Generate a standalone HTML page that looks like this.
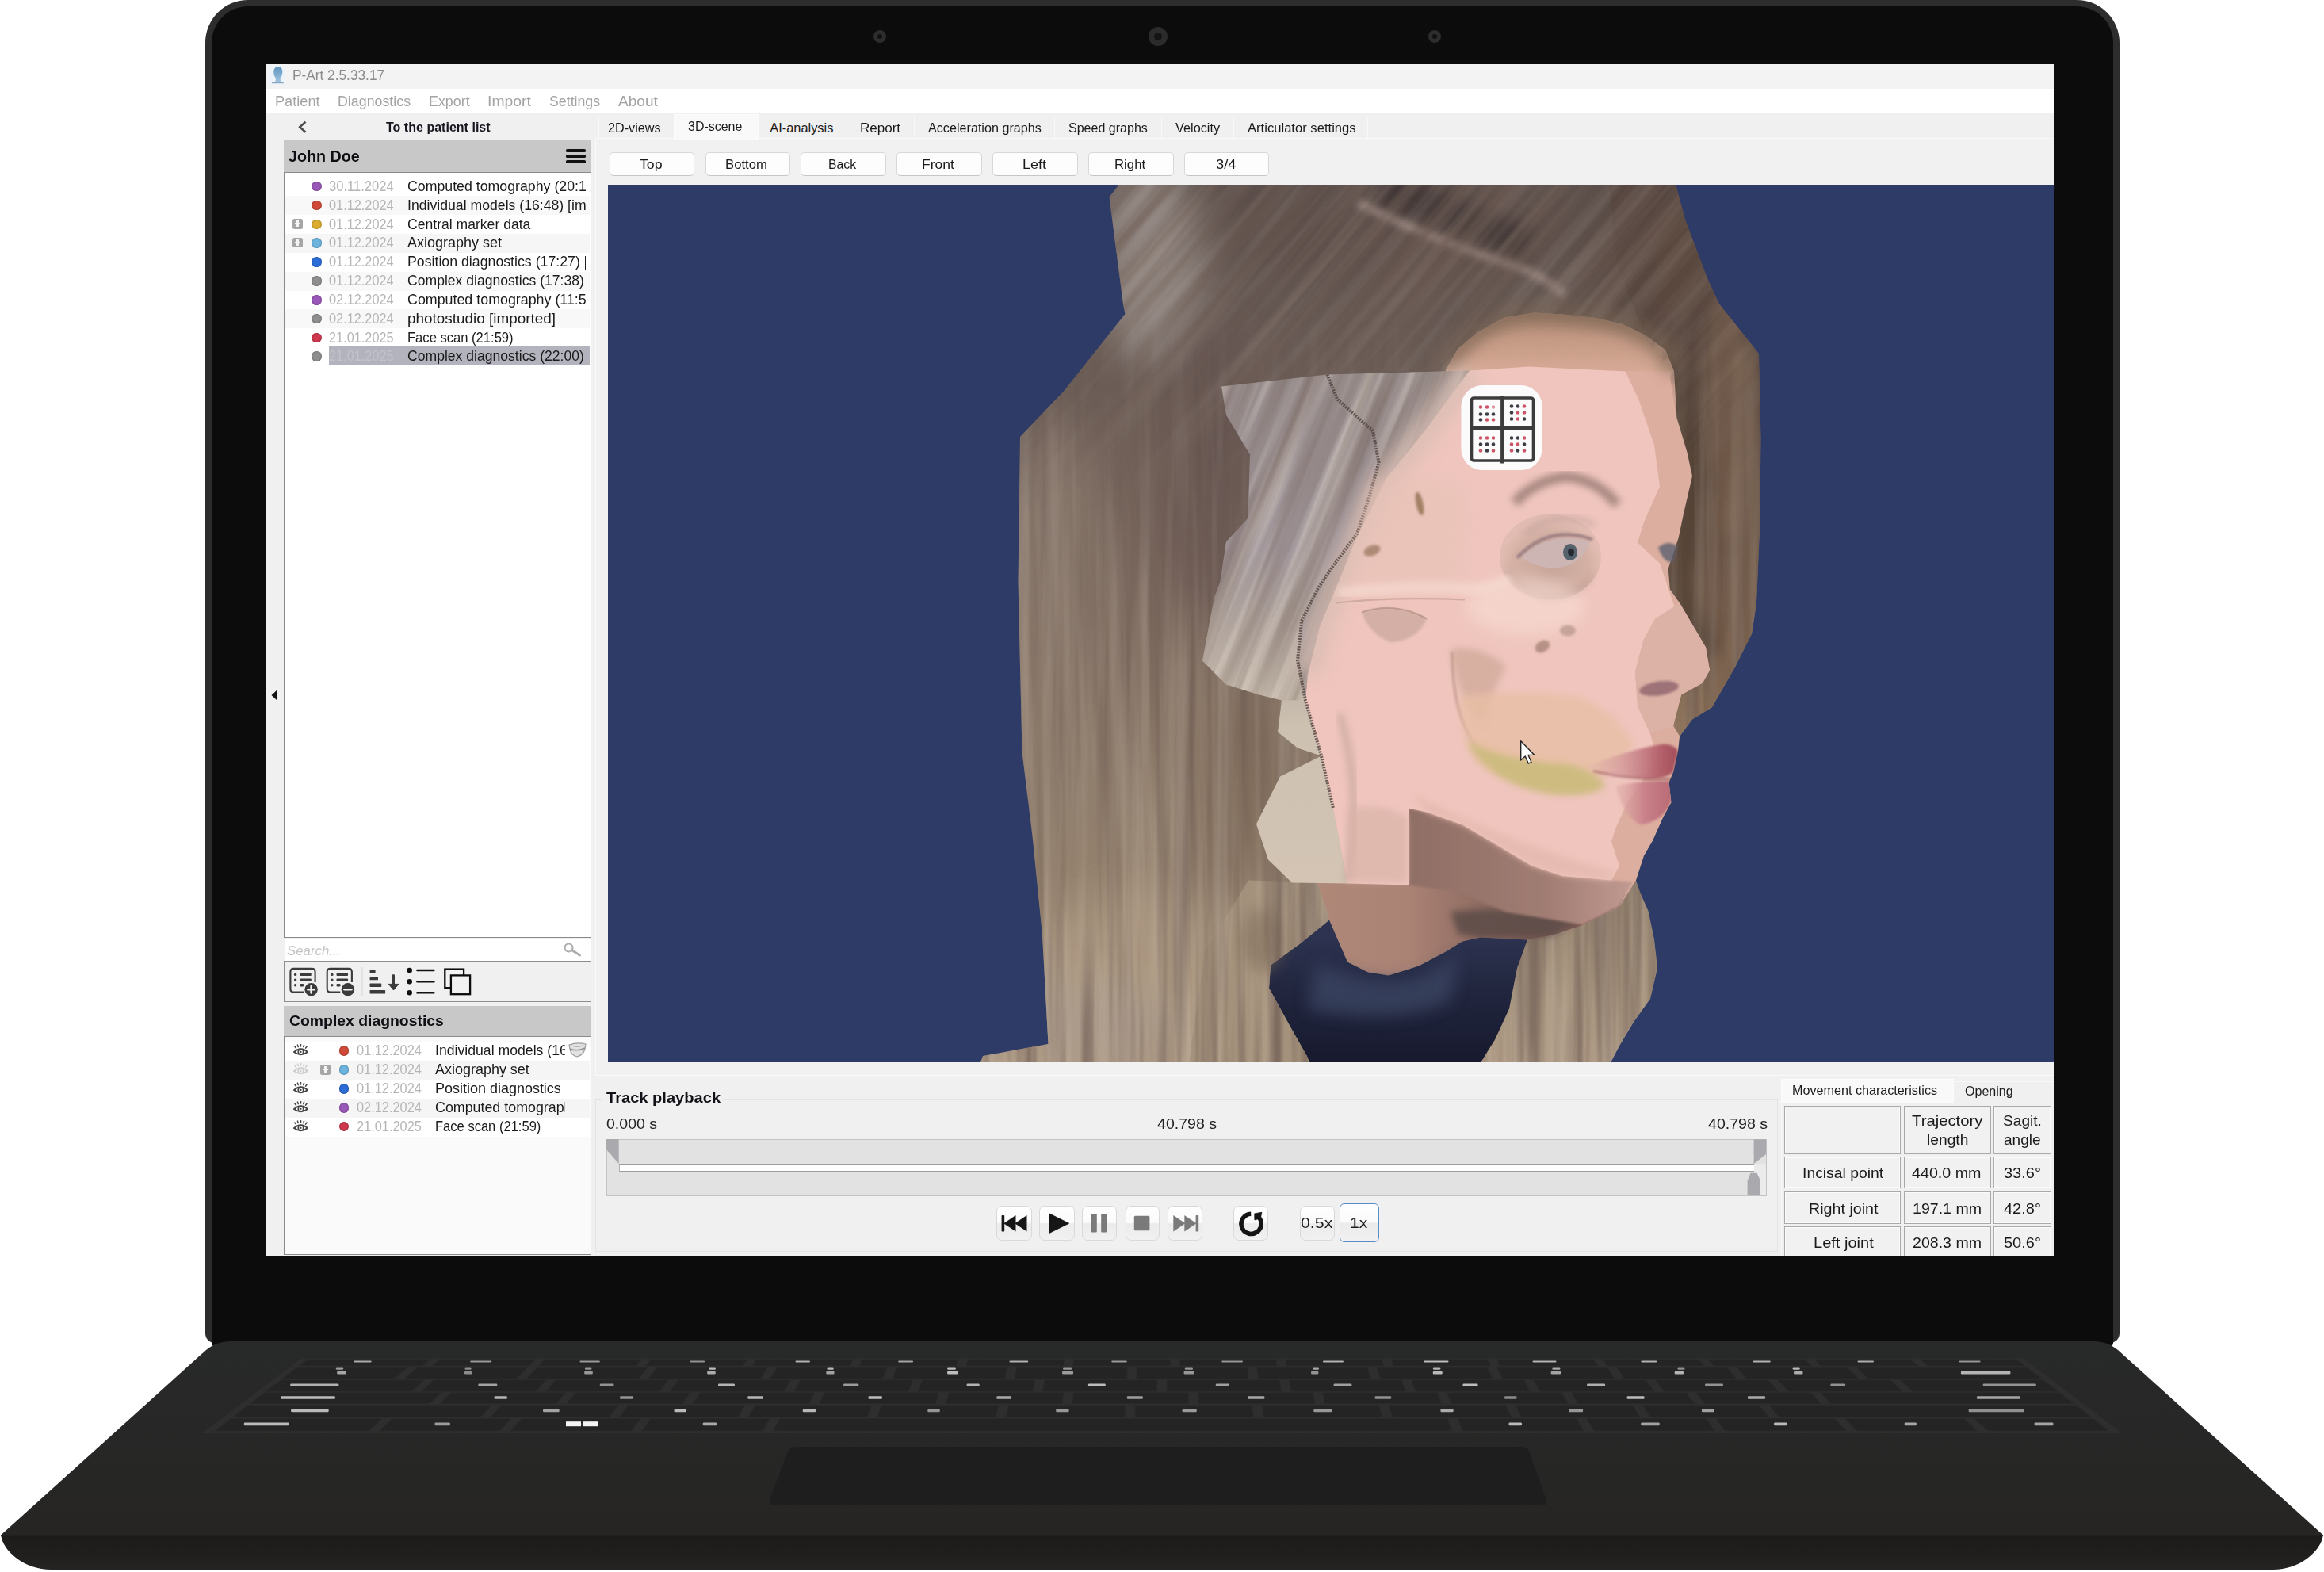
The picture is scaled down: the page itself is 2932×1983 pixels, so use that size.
<!DOCTYPE html>
<html><head><meta charset="utf-8"><title>P-Art</title>
<style>
html,body{margin:0;padding:0;background:#fff;}
body{width:2932px;height:1983px;position:relative;overflow:hidden;font-family:"Liberation Sans",sans-serif;}
.a{position:absolute;box-sizing:border-box;}
.t{position:absolute;white-space:nowrap;line-height:1;transform-origin:0 0;color:#1a1a1a;}
.b{font-weight:700;}
.i{font-style:italic;}
.g{color:#b5b5b5;}
#lid{left:259px;top:0px;width:2415px;height:1694px;background:#2d2d2d;border-radius:54px 54px 12px 12px;}
#lidin{left:267px;top:7.8px;width:2399px;height:1690px;background:#0c0c0c;border-radius:46px 46px 4px 4px;}
#screen{left:335px;top:81px;width:2256px;height:1504px;overflow:hidden;background:#f0f0f0;}
#scr{left:-335px;top:-81px;width:2932px;height:1983px;}
.dot{position:absolute;width:12.6px;height:12.6px;margin:.2px;border-radius:50%;box-shadow:inset 0 0 2.5px rgba(0,0,0,.4);}
.row{position:absolute;left:360px;width:384px;height:24px;}
.plus{position:absolute;width:13.5px;height:12.5px;border-radius:2.5px;background:#a6a6a6;}
.plus:before{content:"";position:absolute;left:3px;right:3px;top:5.2px;height:2.2px;background:#f4f4f4;}
.plus:after{content:"";position:absolute;top:2.4px;bottom:2.4px;left:5.6px;width:2.3px;background:#f4f4f4;}
.tab{position:absolute;box-sizing:border-box;top:147px;height:27px;background:#f0f0f0;border:1.5px solid #f9f9f9;border-bottom:none;}
.btn{position:absolute;box-sizing:border-box;top:192px;height:29.5px;width:107.5px;background:#fdfdfd;border:1.3px solid #d8d8d8;border-bottom-color:#c6c6c6;border-radius:5px;}
.pb{position:absolute;box-sizing:border-box;top:1521px;height:44px;width:44.5px;border:1.3px solid #d9d9d9;border-radius:7px;background:linear-gradient(#fefefe 0%,#fbfbfb 48%,#ebebeb 52%,#f1f1f1 100%);}
.cell{position:absolute;box-sizing:border-box;border:1.6px solid #a9a9a9;background:#f1f1f1;box-shadow:inset 1px 1px 0 #fbfbfb,inset -1px -1px 0 #fbfbfb;}
</style></head>
<body>
<!-- ===== laptop lid ===== -->
<div class="a" id="lid"></div>
<div class="a" id="lidin"></div>
<!-- cameras -->
<div class="a" style="left:1102px;top:38px;width:16px;height:16px;border-radius:50%;background:#2d2d2d;"></div>
<div class="a" style="left:1107px;top:43px;width:6px;height:6px;border-radius:50%;background:#111;"></div>
<div class="a" style="left:1449px;top:34px;width:24px;height:24px;border-radius:50%;background:#2b2b2b;"></div>
<div class="a" style="left:1456px;top:41px;width:10px;height:10px;border-radius:50%;background:#141414;"></div>
<div class="a" style="left:1802px;top:38px;width:16px;height:16px;border-radius:50%;background:#2d2d2d;"></div>
<div class="a" style="left:1807px;top:43px;width:6px;height:6px;border-radius:50%;background:#111;"></div>
<svg class="a" style="left:0;top:1680px" width="2932" height="303" viewBox="0 1680 2932 303">
<defs><linearGradient id="bt" x1="0" y1="0" x2="0" y2="1"><stop offset="0" stop-color="#282929"/><stop offset="1" stop-color="#262524"/></linearGradient><linearGradient id="lip" x1="0" y1="0" x2="0" y2="1"><stop offset="0" stop-color="#1c1b1a"/><stop offset="0.6" stop-color="#201f1d"/><stop offset="1" stop-color="#262422"/></linearGradient></defs>
<path d="M1 1936 L2931 1936 C2928 1958 2900 1980 2868 1980 L64 1980 C32 1980 4 1958 1 1936Z" fill="url(#lip)"/>
<path d="M300 1691.5 L2632 1691.5 C2652 1691.5 2662 1695 2672 1703 L2931 1936.5 L1 1936.5 L260 1703 C270 1695 280 1691.5 300 1691.5Z" fill="url(#bt)"/>
<path d="M379.7 1713.5 L2552.3 1713.5 L2677.3 1808 L254.7 1808Z" fill="#2e2e2e"/>
<path d="M387.3 1715.3 L541.4 1715.3 L533.1 1722.8 L377.6 1722.8Z M553.4 1715.3 L674.9 1715.3 L667.8 1722.8 L545.1 1722.8Z M686.9 1715.3 L808.5 1715.3 L802.6 1722.8 L679.9 1722.8Z M820.5 1715.3 L942.1 1715.3 L937.3 1722.8 L814.7 1722.8Z M954.0 1715.3 L1075.6 1715.3 L1072.1 1722.8 L949.4 1722.8Z M1087.6 1715.3 L1209.2 1715.3 L1206.9 1722.8 L1084.2 1722.8Z M1221.1 1715.3 L1342.7 1715.3 L1341.6 1722.8 L1218.9 1722.8Z M1354.7 1715.3 L1476.3 1715.3 L1476.4 1722.8 L1353.7 1722.8Z M1488.2 1715.3 L1609.8 1715.3 L1611.1 1722.8 L1488.4 1722.8Z M1621.8 1715.3 L1743.4 1715.3 L1745.9 1722.8 L1623.2 1722.8Z M1755.3 1715.3 L1876.9 1715.3 L1880.6 1722.8 L1758.0 1722.8Z M1888.9 1715.3 L2010.5 1715.3 L2015.4 1722.8 L1892.7 1722.8Z M2022.5 1715.3 L2144.0 1715.3 L2150.1 1722.8 L2027.5 1722.8Z M2156.0 1715.3 L2277.6 1715.3 L2284.9 1722.8 L2162.2 1722.8Z M2289.6 1715.3 L2411.2 1715.3 L2419.7 1722.8 L2297.0 1722.8Z M2423.1 1715.3 L2544.7 1715.3 L2554.4 1722.8 L2431.7 1722.8Z M374.0 1725.6 L513.3 1725.6 L498.2 1739.0 L356.6 1739.0Z M525.4 1725.6 L664.8 1725.6 L652.1 1739.0 L510.5 1739.0Z M676.9 1725.6 L816.2 1725.6 L805.9 1739.0 L664.4 1739.0Z M828.3 1725.6 L967.7 1725.6 L959.8 1739.0 L818.2 1739.0Z M979.8 1725.6 L1119.2 1725.6 L1113.6 1739.0 L972.1 1739.0Z M1131.3 1725.6 L1270.6 1725.6 L1267.5 1739.0 L1126.0 1739.0Z M1282.7 1725.6 L1422.1 1725.6 L1421.4 1739.0 L1279.8 1739.0Z M1434.2 1725.6 L1573.5 1725.6 L1575.2 1739.0 L1433.7 1739.0Z M1585.7 1725.6 L1725.0 1725.6 L1729.1 1739.0 L1587.6 1739.0Z M1737.1 1725.6 L1876.5 1725.6 L1883.0 1739.0 L1741.4 1739.0Z M1888.6 1725.6 L2027.9 1725.6 L2036.8 1739.0 L1895.3 1739.0Z M2040.0 1725.6 L2179.4 1725.6 L2190.7 1739.0 L2049.2 1739.0Z M2191.5 1725.6 L2330.8 1725.6 L2344.6 1739.0 L2203.0 1739.0Z M2343.0 1725.6 L2558.0 1725.6 L2575.4 1739.0 L2356.9 1739.0Z M354.0 1741.0 L534.5 1741.0 L519.3 1755.0 L335.9 1755.0Z M546.8 1741.0 L688.7 1741.0 L676.0 1755.0 L531.8 1755.0Z M701.0 1741.0 L842.9 1741.0 L832.8 1755.0 L688.6 1755.0Z M855.3 1741.0 L997.2 1741.0 L989.5 1755.0 L845.3 1755.0Z M1009.5 1741.0 L1151.4 1741.0 L1146.3 1755.0 L1002.1 1755.0Z M1163.7 1741.0 L1305.6 1741.0 L1303.0 1755.0 L1158.8 1755.0Z M1317.9 1741.0 L1459.8 1741.0 L1459.7 1755.0 L1315.5 1755.0Z M1472.2 1741.0 L1614.1 1741.0 L1616.5 1755.0 L1472.3 1755.0Z M1626.4 1741.0 L1768.3 1741.0 L1773.2 1755.0 L1629.0 1755.0Z M1780.6 1741.0 L1922.5 1741.0 L1929.9 1755.0 L1785.7 1755.0Z M1934.8 1741.0 L2076.7 1741.0 L2086.7 1755.0 L1942.5 1755.0Z M2089.1 1741.0 L2231.0 1741.0 L2243.4 1755.0 L2099.2 1755.0Z M2243.3 1741.0 L2385.2 1741.0 L2400.2 1755.0 L2256.0 1755.0Z M2397.5 1741.0 L2578.0 1741.0 L2596.1 1755.0 L2412.7 1755.0Z M333.3 1757.0 L556.4 1757.0 L542.6 1770.3 L316.1 1770.3Z M569.0 1757.0 L713.5 1757.0 L702.1 1770.3 L555.4 1770.3Z M726.1 1757.0 L870.6 1757.0 L861.6 1770.3 L714.8 1770.3Z M883.2 1757.0 L1027.7 1757.0 L1021.0 1770.3 L874.3 1770.3Z M1040.3 1757.0 L1184.8 1757.0 L1180.5 1770.3 L1033.8 1770.3Z M1197.4 1757.0 L1341.9 1757.0 L1340.0 1770.3 L1193.3 1770.3Z M1354.5 1757.0 L1499.0 1757.0 L1499.5 1770.3 L1352.8 1770.3Z M1511.6 1757.0 L1656.1 1757.0 L1659.0 1770.3 L1512.2 1770.3Z M1668.7 1757.0 L1813.2 1757.0 L1818.5 1770.3 L1671.7 1770.3Z M1825.7 1757.0 L1970.3 1757.0 L1977.9 1770.3 L1831.2 1770.3Z M1982.8 1757.0 L2127.4 1757.0 L2137.4 1770.3 L1990.7 1770.3Z M2139.9 1757.0 L2284.5 1757.0 L2296.9 1770.3 L2150.2 1770.3Z M2297.0 1757.0 L2598.7 1757.0 L2615.9 1770.3 L2309.7 1770.3Z M312.6 1773.0 L619.8 1773.0 L606.1 1787.4 L294.0 1787.4Z M632.6 1773.0 L779.7 1773.0 L768.7 1787.4 L619.1 1787.4Z M792.5 1773.0 L939.7 1773.0 L931.2 1787.4 L781.7 1787.4Z M952.5 1773.0 L1099.7 1773.0 L1093.8 1787.4 L944.2 1787.4Z M1112.5 1773.0 L1259.6 1773.0 L1256.3 1787.4 L1106.8 1787.4Z M1272.4 1773.0 L1419.6 1773.0 L1418.9 1787.4 L1269.3 1787.4Z M1432.4 1773.0 L1579.6 1773.0 L1581.4 1787.4 L1431.9 1787.4Z M1592.4 1773.0 L1739.5 1773.0 L1744.0 1787.4 L1594.4 1787.4Z M1752.3 1773.0 L1899.5 1773.0 L1906.5 1787.4 L1757.0 1787.4Z M1912.3 1773.0 L2059.5 1773.0 L2069.1 1787.4 L1919.5 1787.4Z M2072.3 1773.0 L2219.4 1773.0 L2231.6 1787.4 L2082.1 1787.4Z M2232.2 1773.0 L2619.4 1773.0 L2638.0 1787.4 L2244.6 1787.4Z M291.3 1789.5 L481.9 1789.5 L465.3 1804.8 L271.5 1804.8Z M495.0 1789.5 L644.8 1789.5 L631.0 1804.8 L478.6 1804.8Z M657.9 1789.5 L807.8 1789.5 L796.7 1804.8 L644.3 1804.8Z M820.8 1789.5 L970.7 1789.5 L962.4 1804.8 L809.9 1804.8Z M983.7 1789.5 L1826.1 1789.5 L1832.1 1804.8 L975.6 1804.8Z M1839.1 1789.5 L1989.0 1789.5 L1997.8 1804.8 L1845.4 1804.8Z M2002.0 1789.5 L2151.9 1789.5 L2163.5 1804.8 L2011.1 1804.8Z M2165.0 1789.5 L2314.9 1789.5 L2329.2 1804.8 L2176.7 1804.8Z M2327.9 1789.5 L2477.8 1789.5 L2494.8 1804.8 L2342.4 1804.8Z M2490.8 1789.5 L2640.7 1789.5 L2660.5 1804.8 L2508.1 1804.8Z" fill="#242424" stroke="#2a2a2a" stroke-width="0.8" stroke-linejoin="round"/>
<rect x="446.2" y="1716.5" width="22.5" height="2.0" rx="1.2" fill="#f2f2f2" opacity="0.67"/>
<rect x="593.2" y="1716.5" width="27.1" height="2.0" rx="1.2" fill="#f2f2f2" opacity="0.57"/>
<rect x="731.4" y="1716.5" width="25.5" height="2.0" rx="1.2" fill="#f2f2f2" opacity="0.59"/>
<rect x="870.4" y="1716.5" width="18.8" height="2.0" rx="1.2" fill="#f2f2f2" opacity="0.54"/>
<rect x="1003.5" y="1716.5" width="18.5" height="2.0" rx="1.2" fill="#f2f2f2" opacity="0.69"/>
<rect x="1133.1" y="1716.5" width="19.0" height="2.0" rx="1.2" fill="#f2f2f2" opacity="0.63"/>
<rect x="1273.4" y="1716.5" width="23.9" height="2.0" rx="1.2" fill="#f2f2f2" opacity="0.69"/>
<rect x="1402.2" y="1716.5" width="19.7" height="2.0" rx="1.2" fill="#f2f2f2" opacity="0.58"/>
<rect x="1541.2" y="1716.5" width="26.8" height="2.0" rx="1.2" fill="#f2f2f2" opacity="0.56"/>
<rect x="1668.9" y="1716.5" width="26.1" height="2.0" rx="1.2" fill="#f2f2f2" opacity="0.70"/>
<rect x="1795.8" y="1716.5" width="31.7" height="2.0" rx="1.2" fill="#f2f2f2" opacity="0.75"/>
<rect x="1933.5" y="1716.5" width="30.0" height="2.0" rx="1.2" fill="#f2f2f2" opacity="0.71"/>
<rect x="2070.3" y="1716.5" width="20.0" height="2.0" rx="1.2" fill="#f2f2f2" opacity="0.70"/>
<rect x="2211.5" y="1716.5" width="22.3" height="2.0" rx="1.2" fill="#f2f2f2" opacity="0.70"/>
<rect x="2343.5" y="1716.5" width="20.5" height="2.0" rx="1.2" fill="#f2f2f2" opacity="0.68"/>
<rect x="2471.7" y="1716.5" width="26.9" height="2.0" rx="1.2" fill="#f2f2f2" opacity="0.56"/>
<rect x="425.2" y="1729.8" width="11.7" height="3.6" rx="1.2" fill="#f2f2f2" opacity="0.63"/>
<rect x="423.8" y="1725.4" width="9.4" height="2.4" rx="1.2" fill="#f2f2f2" opacity="0.59"/>
<rect x="586.0" y="1729.8" width="10.0" height="3.6" rx="1.2" fill="#f2f2f2" opacity="0.51"/>
<rect x="586.6" y="1725.4" width="8.0" height="2.4" rx="1.2" fill="#f2f2f2" opacity="0.51"/>
<rect x="737.2" y="1729.8" width="10.6" height="3.6" rx="1.2" fill="#f2f2f2" opacity="0.57"/>
<rect x="737.9" y="1725.4" width="8.5" height="2.4" rx="1.2" fill="#f2f2f2" opacity="0.56"/>
<rect x="892.2" y="1729.8" width="10.5" height="3.6" rx="1.2" fill="#f2f2f2" opacity="0.67"/>
<rect x="894.5" y="1725.4" width="8.4" height="2.4" rx="1.2" fill="#f2f2f2" opacity="0.74"/>
<rect x="1042.3" y="1729.8" width="10.2" height="3.6" rx="1.2" fill="#f2f2f2" opacity="0.61"/>
<rect x="1043.5" y="1725.4" width="8.2" height="2.4" rx="1.2" fill="#f2f2f2" opacity="0.73"/>
<rect x="1195.1" y="1729.8" width="13.4" height="3.6" rx="1.2" fill="#f2f2f2" opacity="0.75"/>
<rect x="1195.2" y="1725.4" width="10.7" height="2.4" rx="1.2" fill="#f2f2f2" opacity="0.74"/>
<rect x="1340.1" y="1729.8" width="13.9" height="3.6" rx="1.2" fill="#f2f2f2" opacity="0.59"/>
<rect x="1341.0" y="1725.4" width="11.1" height="2.4" rx="1.2" fill="#f2f2f2" opacity="0.56"/>
<rect x="1493.6" y="1729.8" width="12.8" height="3.6" rx="1.2" fill="#f2f2f2" opacity="0.56"/>
<rect x="1494.8" y="1725.4" width="10.2" height="2.4" rx="1.2" fill="#f2f2f2" opacity="0.55"/>
<rect x="1654.1" y="1729.8" width="9.2" height="3.6" rx="1.2" fill="#f2f2f2" opacity="0.55"/>
<rect x="1656.6" y="1725.4" width="7.4" height="2.4" rx="1.2" fill="#f2f2f2" opacity="0.66"/>
<rect x="1807.8" y="1729.8" width="11.9" height="3.6" rx="1.2" fill="#f2f2f2" opacity="0.73"/>
<rect x="1807.9" y="1725.4" width="9.5" height="2.4" rx="1.2" fill="#f2f2f2" opacity="0.71"/>
<rect x="1956.7" y="1729.8" width="12.5" height="3.6" rx="1.2" fill="#f2f2f2" opacity="0.62"/>
<rect x="1958.4" y="1725.4" width="10.0" height="2.4" rx="1.2" fill="#f2f2f2" opacity="0.66"/>
<rect x="2112.7" y="1729.8" width="11.3" height="3.6" rx="1.2" fill="#f2f2f2" opacity="0.70"/>
<rect x="2116.5" y="1725.4" width="9.0" height="2.4" rx="1.2" fill="#f2f2f2" opacity="0.52"/>
<rect x="2263.1" y="1729.8" width="11.4" height="3.6" rx="1.2" fill="#f2f2f2" opacity="0.67"/>
<rect x="2261.6" y="1725.4" width="9.1" height="2.4" rx="1.2" fill="#f2f2f2" opacity="0.73"/>
<rect x="2473.9" y="1729.8" width="62.5" height="3.6" rx="1.2" fill="#f2f2f2" opacity="0.70"/>
<rect x="366.2" y="1745.5" width="61.2" height="3.6" rx="1.2" fill="#f2f2f2" opacity="0.69"/>
<rect x="603.4" y="1745.5" width="23.9" height="3.6" rx="1.2" fill="#f2f2f2" opacity="0.62"/>
<rect x="756.8" y="1745.5" width="17.6" height="3.6" rx="1.2" fill="#f2f2f2" opacity="0.54"/>
<rect x="906.0" y="1745.5" width="21.0" height="3.6" rx="1.2" fill="#f2f2f2" opacity="0.70"/>
<rect x="1064.1" y="1745.5" width="19.2" height="3.6" rx="1.2" fill="#f2f2f2" opacity="0.58"/>
<rect x="1219.6" y="1745.5" width="16.1" height="3.6" rx="1.2" fill="#f2f2f2" opacity="0.70"/>
<rect x="1372.9" y="1745.5" width="21.9" height="3.6" rx="1.2" fill="#f2f2f2" opacity="0.74"/>
<rect x="1533.8" y="1745.5" width="17.2" height="3.6" rx="1.2" fill="#f2f2f2" opacity="0.60"/>
<rect x="1682.6" y="1745.5" width="22.8" height="3.6" rx="1.2" fill="#f2f2f2" opacity="0.60"/>
<rect x="1845.5" y="1745.5" width="19.0" height="3.6" rx="1.2" fill="#f2f2f2" opacity="0.74"/>
<rect x="2002.1" y="1745.5" width="23.0" height="3.6" rx="1.2" fill="#f2f2f2" opacity="0.68"/>
<rect x="2151.1" y="1745.5" width="22.8" height="3.6" rx="1.2" fill="#f2f2f2" opacity="0.54"/>
<rect x="2309.4" y="1745.5" width="18.7" height="3.6" rx="1.2" fill="#f2f2f2" opacity="0.53"/>
<rect x="2501.7" y="1745.5" width="67.1" height="3.6" rx="1.2" fill="#f2f2f2" opacity="0.54"/>
<rect x="354.0" y="1761.2" width="68.9" height="3.6" rx="1.2" fill="#f2f2f2" opacity="0.73"/>
<rect x="623.5" y="1761.2" width="16.4" height="3.6" rx="1.2" fill="#f2f2f2" opacity="0.70"/>
<rect x="782.0" y="1761.2" width="17.1" height="3.6" rx="1.2" fill="#f2f2f2" opacity="0.54"/>
<rect x="943.3" y="1761.2" width="19.4" height="3.6" rx="1.2" fill="#f2f2f2" opacity="0.71"/>
<rect x="1095.5" y="1761.2" width="17.4" height="3.6" rx="1.2" fill="#f2f2f2" opacity="0.75"/>
<rect x="1257.3" y="1761.2" width="18.8" height="3.6" rx="1.2" fill="#f2f2f2" opacity="0.66"/>
<rect x="1421.8" y="1761.2" width="20.1" height="3.6" rx="1.2" fill="#f2f2f2" opacity="0.59"/>
<rect x="1574.2" y="1761.2" width="21.2" height="3.6" rx="1.2" fill="#f2f2f2" opacity="0.64"/>
<rect x="1734.6" y="1761.2" width="20.6" height="3.6" rx="1.2" fill="#f2f2f2" opacity="0.53"/>
<rect x="1898.0" y="1761.2" width="15.5" height="3.6" rx="1.2" fill="#f2f2f2" opacity="0.50"/>
<rect x="2052.6" y="1761.2" width="22.0" height="3.6" rx="1.2" fill="#f2f2f2" opacity="0.74"/>
<rect x="2204.9" y="1761.2" width="22.2" height="3.6" rx="1.2" fill="#f2f2f2" opacity="0.66"/>
<rect x="2493.9" y="1761.2" width="55.0" height="3.6" rx="1.2" fill="#f2f2f2" opacity="0.63"/>
<rect x="367.1" y="1777.7" width="47.6" height="3.6" rx="1.2" fill="#f2f2f2" opacity="0.73"/>
<rect x="685.0" y="1777.7" width="20.7" height="3.6" rx="1.2" fill="#f2f2f2" opacity="0.61"/>
<rect x="850.5" y="1777.7" width="15.6" height="3.6" rx="1.2" fill="#f2f2f2" opacity="0.72"/>
<rect x="1012.7" y="1777.7" width="16.5" height="3.6" rx="1.2" fill="#f2f2f2" opacity="0.71"/>
<rect x="1170.3" y="1777.7" width="15.5" height="3.6" rx="1.2" fill="#f2f2f2" opacity="0.55"/>
<rect x="1332.2" y="1777.7" width="16.4" height="3.6" rx="1.2" fill="#f2f2f2" opacity="0.56"/>
<rect x="1491.5" y="1777.7" width="18.3" height="3.6" rx="1.2" fill="#f2f2f2" opacity="0.57"/>
<rect x="1657.3" y="1777.7" width="22.9" height="3.6" rx="1.2" fill="#f2f2f2" opacity="0.56"/>
<rect x="1817.4" y="1777.7" width="16.3" height="3.6" rx="1.2" fill="#f2f2f2" opacity="0.65"/>
<rect x="1979.0" y="1777.7" width="18.1" height="3.6" rx="1.2" fill="#f2f2f2" opacity="0.56"/>
<rect x="2146.9" y="1777.7" width="16.1" height="3.6" rx="1.2" fill="#f2f2f2" opacity="0.60"/>
<rect x="2483.6" y="1777.7" width="69.8" height="3.6" rx="1.2" fill="#f2f2f2" opacity="0.53"/>
<rect x="307.8" y="1794.6" width="56.6" height="3.6" rx="1.2" fill="#f2f2f2" opacity="0.73"/>
<rect x="548.5" y="1794.6" width="19.4" height="3.6" rx="1.2" fill="#f2f2f2" opacity="0.59"/>
<rect x="717.4" y="1794.6" width="15.9" height="3.6" rx="1.2" fill="#f2f2f2" opacity="0.61"/>
<rect x="886.7" y="1794.6" width="17.4" height="3.6" rx="1.2" fill="#f2f2f2" opacity="0.65"/>
<rect x="1903.5" y="1794.6" width="16.5" height="3.6" rx="1.2" fill="#f2f2f2" opacity="0.73"/>
<rect x="2070.2" y="1794.6" width="23.6" height="3.6" rx="1.2" fill="#f2f2f2" opacity="0.61"/>
<rect x="2238.1" y="1794.6" width="16.3" height="3.6" rx="1.2" fill="#f2f2f2" opacity="0.73"/>
<rect x="2402.7" y="1794.6" width="15.2" height="3.6" rx="1.2" fill="#f2f2f2" opacity="0.63"/>
<rect x="2566.6" y="1794.6" width="23.8" height="3.6" rx="1.2" fill="#f2f2f2" opacity="0.63"/>
<rect x="714" y="1793.2" width="19" height="6" fill="#f4f4f4"/><rect x="735" y="1793.2" width="20" height="6" fill="#f4f4f4"/>
<path d="M1004 1825 L1920 1825 Q1927 1825 1929 1831 L1951 1892 Q1953 1899 1945 1899 L977 1899 Q969 1899 971 1892 L994 1831 Q996 1825 1004 1825Z" fill="#1e1e1e"/>
</svg>

<!-- ===== screen ===== -->
<div class="a" id="screen"><div class="a" id="scr">
<!-- title bar -->
<div class="a" style="left:335px;top:81px;width:2256px;height:31px;background:#f3f3f3;"></div>
<div class="a" style="left:335px;top:111.5px;width:2256px;height:30px;background:#fff;"></div>
<div class="a" style="left:339px;top:82.5px;width:21px;height:24px;background:#edf3f9;border-radius:3px;filter:blur(.6px)"></div>
<svg class="a" style="left:339px;top:82px" width="22" height="26" viewBox="339 82 22 26"><defs><linearGradient id="ag" x1="0" y1="0" x2="0" y2="1"><stop offset="0" stop-color="#5f96c2"/><stop offset="1" stop-color="#a6c7e0"/></linearGradient><filter id="ab"><feGaussianBlur stdDeviation=".7"/></filter></defs><g filter="url(#ab)"><path d="M350.9 84.2 C355.8 84.2 356.8 88.6 356.2 92.4 C355.8 95.5 354.6 97.5 353.6 98.6 L354 102.6 L357.4 104 L357.4 105 L343.4 105 L343.4 104 L347.6 102.6 L348 98.6 C346.8 97.4 345.8 95.3 345.4 92.4 C344.9 88.6 346 84.2 350.9 84.2Z" fill="url(#ag)"/><rect x="343" y="103.6" width="14.6" height="1.6" fill="#8aa6c0"/></g></svg>

<span class="t" style="left:369.20px;top:84.70px;font-size:19.26px;transform:scaleX(0.8966);color:#8b8b8b;">P-Art 2.5.33.17</span>
<span class="t" style="left:346.70px;top:117.95px;font-size:19.26px;transform:scaleX(0.9443);color:#a3a3a3;">Patient</span>
<span class="t" style="left:426.20px;top:117.95px;font-size:19.26px;transform:scaleX(0.9255);color:#a3a3a3;">Diagnostics</span>
<span class="t" style="left:541.20px;top:117.95px;font-size:19.26px;transform:scaleX(0.9274);color:#a3a3a3;">Export</span>
<span class="t" style="left:615.45px;top:117.95px;font-size:19.26px;transform:scaleX(1.0053);color:#a3a3a3;">Import</span>
<span class="t" style="left:692.95px;top:117.95px;font-size:19.26px;transform:scaleX(0.9215);color:#a3a3a3;">Settings</span>
<span class="t" style="left:779.70px;top:117.95px;font-size:19.26px;transform:scaleX(0.9908);color:#a3a3a3;">About</span>
<!-- splitter arrow -->
<svg class="a" style="left:341px;top:869px" width="10" height="16" viewBox="0 0 10 16"><path d="M8.5 1.5 L1.5 8 L8.5 14.5Z" fill="#111"/></svg>
<!-- back chevron -->
<svg class="a" style="left:375px;top:152px" width="14" height="17" viewBox="0 0 14 17"><path d="M10.5 1.8 L3.2 8.3 L10.5 14.8" fill="none" stroke="#4d4d4d" stroke-width="2.6" stroke-linejoin="miter"/></svg>
<span class="t b" style="left:486.70px;top:152.16px;font-size:16.35px;transform:scaleX(0.9815);color:#16161f;">To the patient list</span>
<!-- John Doe header -->
<div class="a" style="left:358px;top:177px;width:387.5px;height:40.5px;background:#c8c8c8;"></div>
<span class="t b" style="left:364.20px;top:187.08px;font-size:19.99px;transform:scaleX(0.9841);color:#0e0e12;">John Doe</span>
<div class="a" style="left:714px;top:188px;width:24.5px;height:3.6px;background:#111;border-radius:1.5px;box-shadow:0 7px 0 #111,0 14px 0 #111;"></div>
<!-- upper list -->
<div class="a" style="left:358px;top:216.5px;width:387.5px;height:966px;background:#fff;border:1.6px solid #8a8a8a;"></div>
<div class="row" style="top:247px;background:#f8f8f8"></div>
<div class="row" style="top:295px;background:#f6f6f6"></div>
<div class="row" style="top:343px;background:#f8f8f8"></div>
<div class="row" style="top:390px;background:#f8f8f8"></div>
<div class="a" style="left:414.5px;top:437px;width:329.5px;height:23.2px;background:#b3b3be;"></div>
<div class="dot" style="left:393px;top:228.5px;background:#9a58b8"></div>
<div class="dot" style="left:393px;top:252.5px;background:#d24a39"></div>
<div class="dot" style="left:393px;top:276.5px;background:#dbae2f"></div>
<div class="dot" style="left:393px;top:300px;background:#6db4de"></div>
<div class="dot" style="left:393px;top:324px;background:#2c6dd8"></div>
<div class="dot" style="left:393px;top:348px;background:#8f8f8f"></div>
<div class="dot" style="left:393px;top:372px;background:#9a58b8"></div>
<div class="dot" style="left:393px;top:395.5px;background:#8f8f8f"></div>
<div class="dot" style="left:393px;top:419.5px;background:#cf3950"></div>
<div class="dot" style="left:393px;top:443px;background:#8f8f8f"></div>
<div class="plus" style="left:368.8px;top:276px"></div>
<div class="plus" style="left:368.8px;top:299.8px"></div>
<div class="a" style="left:360px;top:218px;width:379px;height:250px;overflow:hidden"><div class="a" style="left:-360px;top:-218px;width:900px;height:600px">
<span class="t g" style="left:415.45px;top:225.92px;font-size:18.17px;transform:scaleX(0.9114);">30.11.2024</span>
<span class="t g" style="left:415.45px;top:249.72px;font-size:18.17px;transform:scaleX(0.8979);">01.12.2024</span>
<span class="t g" style="left:415.45px;top:273.62px;font-size:18.17px;transform:scaleX(0.8979);">01.12.2024</span>
<span class="t g" style="left:415.45px;top:297.42px;font-size:18.17px;transform:scaleX(0.8979);">01.12.2024</span>
<span class="t g" style="left:415.45px;top:321.22px;font-size:18.17px;transform:scaleX(0.8979);">01.12.2024</span>
<span class="t g" style="left:415.45px;top:345.12px;font-size:18.17px;transform:scaleX(0.8979);">01.12.2024</span>
<span class="t g" style="left:415.45px;top:368.92px;font-size:18.17px;transform:scaleX(0.8979);">02.12.2024</span>
<span class="t g" style="left:415.45px;top:392.72px;font-size:18.17px;transform:scaleX(0.8979);">02.12.2024</span>
<span class="t g" style="left:415.45px;top:416.62px;font-size:18.17px;transform:scaleX(0.8979);">21.01.2025</span>
<span class="t" style="left:415.45px;top:440.42px;font-size:18.17px;transform:scaleX(0.8979);color:#c2c2cb;">21.01.2025</span>
<span class="t" style="left:514.20px;top:225.92px;font-size:18.17px;transform:scaleX(0.9771);">Computed tomography (20:17)</span>
<span class="t" style="left:514.20px;top:249.72px;font-size:18.17px;transform:scaleX(0.9721);">Individual models (16:48) [imported]</span>
<span class="t" style="left:514.20px;top:273.62px;font-size:18.17px;transform:scaleX(0.9682);">Central marker data</span>
<span class="t" style="left:514.20px;top:297.42px;font-size:18.17px;transform:scaleX(0.9916);">Axiography set</span>
<span class="t" style="left:514.20px;top:321.22px;font-size:18.17px;transform:scaleX(0.9766);">Position diagnostics (17:27) [imported]</span>
<span class="t" style="left:514.20px;top:345.12px;font-size:18.17px;transform:scaleX(0.9685);">Complex diagnostics (17:38)</span>
<span class="t" style="left:514.20px;top:368.92px;font-size:18.17px;transform:scaleX(0.9824);">Computed tomography (11:55)</span>
<span class="t" style="left:514.20px;top:392.72px;font-size:18.17px;transform:scaleX(1.0413);">photostudio [imported]</span>
<span class="t" style="left:514.20px;top:416.62px;font-size:18.17px;transform:scaleX(0.9129);">Face scan (21:59)</span>
<span class="t" style="left:514.20px;top:440.42px;font-size:18.17px;transform:scaleX(0.9685);">Complex diagnostics (22:00)</span>
</div></div>
<!-- search -->
<div class="a" style="left:359px;top:1184px;width:385.5px;height:28px;background:#fff;"></div>
<span class="t i" style="left:362.20px;top:1190.98px;font-size:17.15px;transform:scaleX(0.9816);color:#c4c4c4;">Search...</span>
<svg class="a" style="left:709px;top:1188px" width="26" height="20" viewBox="0 0 26 20"><circle cx="8.5" cy="7.5" r="5" fill="none" stroke="#adadad" stroke-width="2.2"/><path d="M12.3 10.6 L22.5 17" stroke="#adadad" stroke-width="3" stroke-linecap="round"/></svg>
<!-- toolbar -->
<div class="a" style="left:358px;top:1212px;width:387.5px;height:51.5px;background:#f0f0f0;border:1.6px solid #8e8e8e;"></div>
<svg class="a" style="left:360px;top:1215px" width="245" height="46" viewBox="360 1215 245 46">
<g fill="none" stroke="#3b3b3b" stroke-width="2.1">
<path d="M383 1251.6 H370.5 Q366.4 1251.6 366.4 1247.5 V1226 Q366.4 1221.9 370.5 1221.9 H393.5 Q397.6 1221.9 397.6 1226 V1239"/>
<path d="M429.3 1251.6 H416.8 Q412.7 1251.6 412.7 1247.5 V1226 Q412.7 1221.9 416.8 1221.9 H439.8 Q443.9 1221.9 443.9 1226 V1239"/>
</g>
<g fill="#3b3b3b">
<circle cx="372.6" cy="1229.4" r="1.7"/><circle cx="372.6" cy="1236.1" r="1.7"/><circle cx="372.6" cy="1242.8" r="1.7"/>
<rect x="378.2" y="1227.7" width="14.6" height="3.3" rx="1.2"/><rect x="378.2" y="1234.4" width="14.6" height="3.3" rx="1.2"/><rect x="378.2" y="1241.1" width="5" height="3.3" rx="1.2"/>
<circle cx="392.6" cy="1248.2" r="8.2"/>
<circle cx="418.9" cy="1229.4" r="1.7"/><circle cx="418.9" cy="1236.1" r="1.7"/><circle cx="418.9" cy="1242.8" r="1.7"/>
<rect x="424.5" y="1227.7" width="14.6" height="3.3" rx="1.2"/><rect x="424.5" y="1234.4" width="14.6" height="3.3" rx="1.2"/><rect x="424.5" y="1241.1" width="5" height="3.3" rx="1.2"/>
<circle cx="438.9" cy="1248.2" r="8.2"/>
<!-- sort -->
<rect x="466.6" y="1224" width="7" height="3.9" rx=".6"/><rect x="466.6" y="1232" width="10.4" height="4.3" rx=".6"/><rect x="466.6" y="1240.6" width="14.6" height="4.4" rx=".6"/><rect x="466.6" y="1248.9" width="19.5" height="4.7" rx=".6"/>
<rect x="494.7" y="1229.2" width="3.3" height="13.5" rx="1"/><path d="M490.3 1241.4 H502.9 L496.5 1249Z" stroke="#3b3b3b" stroke-width="1" stroke-linejoin="round"/>
</g>
<g stroke="#f4f4f4" stroke-width="2.5" stroke-linecap="round"><path d="M388.3 1248.2 H396.9 M392.6 1243.9 V1252.5"/><path d="M434.4 1248.2 H443.4"/></g>
<rect x="456.4" y="1220" width="1.2" height="36.5" fill="#dadada"/>
<g fill="#111"><circle cx="516.7" cy="1224" r="3.3"/><circle cx="516.7" cy="1238.2" r="3.3"/><circle cx="516.7" cy="1252.3" r="3.3"/>
<rect x="525.2" y="1222.8" width="23.4" height="2.5" rx="1.2"/><rect x="525.2" y="1237" width="23.4" height="2.5" rx="1.2"/><rect x="525.2" y="1251.1" width="23.4" height="2.5" rx="1.2"/></g>
<rect x="561.3" y="1222.6" width="23.8" height="23.6" fill="#f3f3f3" stroke="#0c0c0c" stroke-width="2.3"/>
<rect x="568.9" y="1230.4" width="24.2" height="23.8" fill="#f1f1f1" stroke="#0c0c0c" stroke-width="2.3"/>
</svg>

<!-- lower header -->
<div class="a" style="left:358px;top:1268.5px;width:387.5px;height:39px;background:#c8c8c8;"></div>
<span class="t b" style="left:364.70px;top:1279.74px;font-size:17.44px;transform:scaleX(1.1109);color:#0e0e14;">Complex diagnostics</span>
<!-- lower list -->
<div class="a" style="left:358px;top:1306.5px;width:387.5px;height:276.5px;background:#fafafa;border:1.6px solid #8a8a8a;"></div>
<div class="row" style="top:1314px;background:#fff"></div>
<div class="row" style="top:1338px;background:#f5f5f5"></div>
<div class="row" style="top:1362px;background:#fff"></div>
<div class="row" style="top:1386px;background:#f5f5f5"></div>
<div class="row" style="top:1410px;background:#fff"></div>
<div class="dot" style="left:427.5px;top:1319px;background:#d24a39"></div>
<div class="dot" style="left:427.5px;top:1343px;background:#6db4de"></div>
<div class="dot" style="left:427.5px;top:1367px;background:#2c6dd8"></div>
<div class="dot" style="left:427.5px;top:1391px;background:#9a58b8"></div>
<div class="dot" style="left:427.5px;top:1414.5px;background:#cf3950"></div>
<div class="plus" style="left:403.8px;top:1343px"></div>
<svg class="a" style="left:369.7px;top:1317.2px;opacity:1" width="19" height="16" viewBox="0 0 19 16"><path d="M0.9 10.1 Q9.5 2.6 18.1 10.1 Q9.5 16.6 0.9 10.1Z" fill="#fff" stroke="#444" stroke-width="1.9" stroke-linejoin="round"/><circle cx="9.5" cy="9.9" r="3.3" fill="#fff" stroke="#444" stroke-width="1.7"/><circle cx="9.5" cy="9.9" r="1.15" fill="#444"/><path d="M3.4 5.2 L1.9 3 M6.2 3.6 L5.4 1.1 M9.5 3 V0.4 M12.8 3.6 L13.6 1.1 M15.6 5.2 L17.1 3" stroke="#444" stroke-width="1.5" stroke-linecap="round"/></svg>
<svg class="a" style="left:369.7px;top:1340.8px;opacity:0.22" width="19" height="16" viewBox="0 0 19 16"><path d="M0.9 10.1 Q9.5 2.6 18.1 10.1 Q9.5 16.6 0.9 10.1Z" fill="#fff" stroke="#444" stroke-width="1.9" stroke-linejoin="round"/><circle cx="9.5" cy="9.9" r="3.3" fill="#fff" stroke="#444" stroke-width="1.7"/><circle cx="9.5" cy="9.9" r="1.15" fill="#444"/><path d="M3.4 5.2 L1.9 3 M6.2 3.6 L5.4 1.1 M9.5 3 V0.4 M12.8 3.6 L13.6 1.1 M15.6 5.2 L17.1 3" stroke="#444" stroke-width="1.5" stroke-linecap="round"/></svg>
<svg class="a" style="left:369.7px;top:1364.9px;opacity:1" width="19" height="16" viewBox="0 0 19 16"><path d="M0.9 10.1 Q9.5 2.6 18.1 10.1 Q9.5 16.6 0.9 10.1Z" fill="#fff" stroke="#444" stroke-width="1.9" stroke-linejoin="round"/><circle cx="9.5" cy="9.9" r="3.3" fill="#fff" stroke="#444" stroke-width="1.7"/><circle cx="9.5" cy="9.9" r="1.15" fill="#444"/><path d="M3.4 5.2 L1.9 3 M6.2 3.6 L5.4 1.1 M9.5 3 V0.4 M12.8 3.6 L13.6 1.1 M15.6 5.2 L17.1 3" stroke="#444" stroke-width="1.5" stroke-linecap="round"/></svg>
<svg class="a" style="left:369.7px;top:1388.5px;opacity:1" width="19" height="16" viewBox="0 0 19 16"><path d="M0.9 10.1 Q9.5 2.6 18.1 10.1 Q9.5 16.6 0.9 10.1Z" fill="#fff" stroke="#444" stroke-width="1.9" stroke-linejoin="round"/><circle cx="9.5" cy="9.9" r="3.3" fill="#fff" stroke="#444" stroke-width="1.7"/><circle cx="9.5" cy="9.9" r="1.15" fill="#444"/><path d="M3.4 5.2 L1.9 3 M6.2 3.6 L5.4 1.1 M9.5 3 V0.4 M12.8 3.6 L13.6 1.1 M15.6 5.2 L17.1 3" stroke="#444" stroke-width="1.5" stroke-linecap="round"/></svg>
<svg class="a" style="left:369.7px;top:1412.5px;opacity:1" width="19" height="16" viewBox="0 0 19 16"><path d="M0.9 10.1 Q9.5 2.6 18.1 10.1 Q9.5 16.6 0.9 10.1Z" fill="#fff" stroke="#444" stroke-width="1.9" stroke-linejoin="round"/><circle cx="9.5" cy="9.9" r="3.3" fill="#fff" stroke="#444" stroke-width="1.7"/><circle cx="9.5" cy="9.9" r="1.15" fill="#444"/><path d="M3.4 5.2 L1.9 3 M6.2 3.6 L5.4 1.1 M9.5 3 V0.4 M12.8 3.6 L13.6 1.1 M15.6 5.2 L17.1 3" stroke="#444" stroke-width="1.5" stroke-linecap="round"/></svg>
<svg class="a" style="left:716px;top:1314px" width="25" height="22" viewBox="0 0 25 22"><path d="M2 4 Q12 0.5 23 3 L22 9 Q20 17 12 19 Q4 17 3 9Z" fill="#e2e2e2" stroke="#9a9a9a" stroke-width="1.2"/><path d="M3 9 Q12 13 22 8" fill="none" stroke="#8e8e8e" stroke-width="1.5"/><path d="M5 5 Q12 8 20 4.5" fill="none" stroke="#b0b0b0" stroke-width="1.2"/></svg>

<div class="a" style="left:360px;top:1309px;width:353px;height:130px;overflow:hidden"><div class="a" style="left:-360px;top:-1309px;width:900px;height:1500px">
<span class="t g" style="left:449.70px;top:1316.42px;font-size:18.17px;transform:scaleX(0.9007);">01.12.2024</span>
<span class="t g" style="left:449.70px;top:1340.32px;font-size:18.17px;transform:scaleX(0.9007);">01.12.2024</span>
<span class="t g" style="left:449.70px;top:1364.22px;font-size:18.17px;transform:scaleX(0.9007);">01.12.2024</span>
<span class="t g" style="left:449.70px;top:1388.12px;font-size:18.17px;transform:scaleX(0.9007);">02.12.2024</span>
<span class="t g" style="left:449.70px;top:1412.02px;font-size:18.17px;transform:scaleX(0.9007);">21.01.2025</span>
<span class="t" style="left:548.70px;top:1316.42px;font-size:18.17px;transform:scaleX(0.9721);">Individual models (16:48) [imported]</span>
<span class="t" style="left:548.70px;top:1340.32px;font-size:18.17px;transform:scaleX(0.9895);">Axiography set</span>
<span class="t" style="left:548.70px;top:1364.22px;font-size:18.17px;transform:scaleX(0.9898);">Position diagnostics</span>
<span class="t" style="left:548.70px;top:1388.12px;font-size:18.17px;transform:scaleX(0.9824);">Computed tomography (11:55)</span>
<span class="t" style="left:548.70px;top:1412.02px;font-size:18.17px;transform:scaleX(0.9112);">Face scan (21:59)</span>
</div></div>

<!-- tab pane -->
<div class="a" style="left:751px;top:173.5px;width:1845px;height:1183.5px;background:#f1f1f1;border:1.6px solid #f9f9f9;"></div>
<div class="tab" style="left:755px;width:95.5px;"></div>
<div class="tab" style="left:956px;width:112.5px;"></div>
<div class="tab" style="left:1068px;width:85.5px;"></div>
<div class="tab" style="left:1153px;width:177.5px;"></div>
<div class="tab" style="left:1330px;width:135.5px;"></div>
<div class="tab" style="left:1465px;width:91.5px;"></div>
<div class="tab" style="left:1556px;width:169.5px;"></div>
<div class="tab" style="left:849.5px;width:107px;top:144px;height:31.5px;background:#f9f9f9;border-color:#fcfcfc"></div>
<span class="t" style="left:767.20px;top:152.50px;font-size:16.42px;transform:scaleX(0.9871);">2D-views</span>
<span class="t" style="left:867.95px;top:151.10px;font-size:16.42px;transform:scaleX(0.9734);">3D-scene</span>
<span class="t" style="left:971.20px;top:152.50px;font-size:16.42px;">AI-analysis</span>
<span class="t" style="left:1085.45px;top:152.50px;font-size:16.42px;transform:scaleX(1.0376);">Report</span>
<span class="t" style="left:1170.95px;top:152.50px;font-size:16.42px;transform:scaleX(0.9851);">Acceleration graphs</span>
<span class="t" style="left:1348.20px;top:152.50px;font-size:16.42px;transform:scaleX(0.9773);">Speed graphs</span>
<span class="t" style="left:1482.70px;top:152.50px;font-size:16.42px;transform:scaleX(0.9921);">Velocity</span>
<span class="t" style="left:1573.95px;top:152.50px;font-size:16.42px;transform:scaleX(1.0122);">Articulator settings</span>
<!-- view buttons -->
<div class="btn" style="left:768.75px"></div>
<div class="btn" style="left:889.5px"></div>
<div class="btn" style="left:1010.3px"></div>
<div class="btn" style="left:1131.3px"></div>
<div class="btn" style="left:1252.2px"></div>
<div class="btn" style="left:1373px"></div>
<div class="btn" style="left:1493.5px"></div>
<span class="t" style="left:806.70px;top:198.54px;font-size:17.08px;transform:scaleX(1.0382);">Top</span>
<span class="t" style="left:915.45px;top:198.54px;font-size:17.08px;transform:scaleX(0.9767);">Bottom</span>
<span class="t" style="left:1044.95px;top:198.54px;font-size:17.08px;transform:scaleX(0.9244);">Back</span>
<span class="t" style="left:1162.95px;top:198.54px;font-size:17.08px;transform:scaleX(1.0245);">Front</span>
<span class="t" style="left:1289.70px;top:198.54px;font-size:17.08px;transform:scaleX(1.0561);">Left</span>
<span class="t" style="left:1405.95px;top:198.54px;font-size:17.08px;transform:scaleX(0.9806);">Right</span>
<span class="t" style="left:1533.95px;top:198.54px;font-size:17.08px;transform:scaleX(1.0674);">3/4</span>

<svg class="a" style="left:767px;top:232.5px" width="1824" height="1107" viewBox="767 232.5 1824 1107">
<defs>
<linearGradient id="hg" x1="0" y1="232" x2="0" y2="1340" gradientUnits="userSpaceOnUse">
<stop offset="0" stop-color="#5b4f4c"/><stop offset="0.2" stop-color="#695b55"/><stop offset="0.42" stop-color="#7b695f"/><stop offset="0.62" stop-color="#8a7767"/><stop offset="0.82" stop-color="#978470"/><stop offset="0.93" stop-color="#a8957f"/><stop offset="1" stop-color="#b09c86"/></linearGradient>
<linearGradient id="hr" x1="0" y1="232" x2="0" y2="930" gradientUnits="userSpaceOnUse">
<stop offset="0" stop-color="#564640"/><stop offset="0.45" stop-color="#5c4a40"/><stop offset="0.8" stop-color="#735b4a"/><stop offset="1" stop-color="#8c7158"/></linearGradient>
<linearGradient id="ov1" x1="0" y1="470" x2="0" y2="1110" gradientUnits="userSpaceOnUse">
<stop offset="0" stop-color="#958a8a"/><stop offset="0.35" stop-color="#a1969a"/><stop offset="0.5" stop-color="#b0a49d"/><stop offset="0.7" stop-color="#cdc1b1"/><stop offset="1" stop-color="#d3c4b4"/></linearGradient>
<linearGradient id="tn" x1="0" y1="1180" x2="0" y2="1340" gradientUnits="userSpaceOnUse">
<stop offset="0" stop-color="#2d3350"/><stop offset="0.5" stop-color="#20243c"/><stop offset="1" stop-color="#171a2e"/></linearGradient>
<filter id="b4" x="-20%" y="-20%" width="140%" height="140%"><feGaussianBlur stdDeviation="4"/></filter>
<filter id="b10" x="-30%" y="-30%" width="160%" height="160%"><feGaussianBlur stdDeviation="10"/></filter>
<filter id="b25" x="-50%" y="-50%" width="200%" height="200%"><feGaussianBlur stdDeviation="25"/></filter>
<filter id="b2" x="-20%" y="-20%" width="140%" height="140%"><feGaussianBlur stdDeviation="1.6"/></filter>
<filter id="st" x="0" y="0" width="100%" height="100%"><feTurbulence type="fractalNoise" baseFrequency="0.055 0.0022" numOctaves="3" seed="4"/><feColorMatrix type="matrix" values="0 0 0 0 0.16  0 0 0 0 0.11  0 0 0 0 0.09  2.4 0 0 0 -0.95"/></filter>
<filter id="sl" x="0" y="0" width="100%" height="100%"><feTurbulence type="fractalNoise" baseFrequency="0.06 0.0025" numOctaves="3" seed="11"/><feColorMatrix type="matrix" values="0 0 0 0 0.95  0 0 0 0 0.88  0 0 0 0 0.78  0 2.4 0 0 -0.98"/></filter>
<linearGradient id="lipg" x1="2000" y1="0" x2="2117" y2="0" gradientUnits="userSpaceOnUse"><stop offset="0" stop-color="#e3b3ae" stop-opacity=".25"/><stop offset="0.45" stop-color="#cf8f92" stop-opacity=".8"/><stop offset="0.8" stop-color="#b5626c"/><stop offset="1" stop-color="#a24d5a"/></linearGradient>
<linearGradient id="lipg2" x1="2040" y1="0" x2="2110" y2="0" gradientUnits="userSpaceOnUse"><stop offset="0" stop-color="#e0a9a8" stop-opacity=".45"/><stop offset="0.5" stop-color="#c9818a"/><stop offset="1" stop-color="#b86a74"/></linearGradient>
<linearGradient id="fh" x1="0" y1="392" x2="0" y2="470" gradientUnits="userSpaceOnUse"><stop offset="0" stop-color="#a8846f"/><stop offset="0.45" stop-color="#c59a85"/><stop offset="1" stop-color="#d6aa96"/></linearGradient>
<linearGradient id="uj" x1="1777" y1="0" x2="2064" y2="0" gradientUnits="userSpaceOnUse"><stop offset="0" stop-color="#8f6e65"/><stop offset="0.6" stop-color="#a07c72"/><stop offset="0.85" stop-color="#b58f86"/><stop offset="1" stop-color="#c39c94"/></linearGradient>
<linearGradient id="nk" x1="1650" y1="0" x2="1930" y2="0" gradientUnits="userSpaceOnUse"><stop offset="0" stop-color="#b08878"/><stop offset="0.45" stop-color="#ab8375"/><stop offset="0.8" stop-color="#8d6a60"/><stop offset="1" stop-color="#7a5a54"/></linearGradient>
<clipPath id="hairAll"><path d="M1237 232 H2035 L2040 330 L2070 420 L2101 441 L2075 422 L2046 408 L2010 400 L1972 396 L1935 394 L1898 400 L1865 418 L1839 440 L1824 466 L1674 472 L1541 487 L1547 523 L1577 573 L1574 653 L1547 683 L1532 753 L1517 833 L1547 863 L1587 875 L1617 883 L1612 923 L1637 943 L1667 953 L1615 979 L1585 1039 L1600 1084 L1630 1113 L1661 1110 L1675 1151 L1677 1160 L1640 1190 L1603 1217 L1601 1246 L1628 1295 L1649 1332 L1652 1340 H1237Z M1927 1185 L1958 1179 L1997 1166 L2043 1143 L2064 1110 L2069 1125 L2079 1148 L2087 1185 L2091 1221 L2082 1260 L2061 1288 L2043 1319 L2032 1340 L1868 1340 L1886 1311 L1904 1272 L1914 1221Z M2030 232 L2114 232 L2126.5 278 L2154 350.5 L2169 383 L2219 445.5 L2221.5 553 L2220 669 L2216 760 L2210 799 L2189 841 L2160 892 L2135 907 L2119 928 L2111 915 L2121 876 L2148 861 L2157 845 L2152 816 L2119 760 L2107 743 L2105 717 L2118 678 L2124 648 L2135 600 L2128 570 L2115 526 L2105 462 L2070 420 L2040 330Z"/></clipPath>
<linearGradient id="mv" x1="0" y1="380" x2="0" y2="640" gradientUnits="userSpaceOnUse"><stop offset="0" stop-color="#000"/><stop offset="1" stop-color="#fff"/></linearGradient>
<linearGradient id="mt" x1="0" y1="380" x2="0" y2="640" gradientUnits="userSpaceOnUse"><stop offset="0" stop-color="#fff"/><stop offset="1" stop-color="#000"/></linearGradient>
<mask id="mkv" maskUnits="userSpaceOnUse" x="1200" y="232" width="1100" height="1110"><rect x="1200" y="232" width="1100" height="1110" fill="url(#mv)"/></mask>
<mask id="mkt" maskUnits="userSpaceOnUse" x="1200" y="232" width="1100" height="1110"><rect x="1200" y="232" width="1100" height="1110" fill="url(#mt)"/></mask>
<clipPath id="ovh"><path d="M1541 487 L1674.5 472 L1854 467 L1800 540 L1749 603 L1709 683 L1689 733 L1665 790 L1650 850 L1647 883 L1617 883 L1587 875.5 L1547 863 L1517 833 L1532 753 L1539.5 733 L1547 683 L1574.5 653 L1577 573 L1547 523Z"/></clipPath>
<clipPath id="head"><path id="hp" d="M1412 232 L1399.5 248 L1417 383 L1419.5 395.5 L1342 493 L1287 550.5 L1284.5 733 L1289.5 948 L1302.5 1054 L1315 1179 L1322.5 1316.5 L1240 1331.5 L1237 1340 L2032 1340 L2043 1319 L2061.5 1288 L2082 1259.5 L2091 1220.7 L2087 1184.6 L2079.5 1148.4 L2069 1125 L2064 1110 L2074 1079 L2085 1060 L2098 1031 L2108.5 1011.7 L2105.6 986.6 L2111.4 973 L2117.2 946 L2119.2 928.5 L2134.7 907.2 L2159.8 891.7 L2188.9 841.3 L2210.2 798.7 L2216 760 L2220 669 L2221.5 553 L2219 445.5 L2169 383 L2154 350.5 L2126.5 278 L2114 232Z"/></clipPath>
</defs>
<rect x="767" y="232" width="1824" height="1108" fill="#2e3b67"/>
<!-- hair silhouette -->
<use href="#hp" fill="url(#hg)"/>
<g clip-path="url(#head)">
<!-- hair tone variations -->
<ellipse cx="1450" cy="330" rx="70" ry="130" fill="#9b918b" opacity=".8" filter="url(#b25)"/>
<ellipse cx="1760" cy="290" rx="230" ry="70" fill="#5e4e46" opacity=".5" filter="url(#b25)"/>
<path d="M1740 236 Q1820 262 1930 310" stroke="#3a3033" stroke-width="44" fill="none" opacity=".75" filter="url(#b10)"/>
<path d="M1713 255 Q1800 300 1917 337 Q1950 350 1975 372" stroke="#9b8782" stroke-width="11" fill="none" opacity=".75" filter="url(#b4)"/>
<ellipse cx="2060" cy="330" rx="60" ry="90" fill="#57453b" opacity=".55" filter="url(#b25)"/>
<ellipse cx="1530" cy="600" rx="60" ry="190" fill="#5f4e4b" opacity=".55" filter="url(#b25)"/>
<ellipse cx="1340" cy="800" rx="50" ry="260" fill="#9a8a7a" opacity=".6" filter="url(#b25)"/>
<ellipse cx="1440" cy="1230" rx="150" ry="110" fill="#bba790" opacity=".4" filter="url(#b25)"/>
<ellipse cx="1560" cy="1000" rx="50" ry="130" fill="#75614f" opacity=".5" filter="url(#b25)"/>
<ellipse cx="1390" cy="1290" rx="90" ry="50" fill="#a7978a" opacity=".7" filter="url(#b25)"/>
<!-- right hair (far side) -->
<path d="M2030 232 L2114 232 L2126.5 278 L2154 350.5 L2169 383 L2219 445.5 L2221.5 553 L2220 669 L2216 760 L2210 799 L2189 841 L2160 892 L2135 907 L2119 928 L2111 915 L2121 876 L2148 861 L2157 845 L2152 816 L2119 760 L2107 743 L2105 717 L2118 678 L2124 648 L2135 600 L2128 570 L2115 526 L2112 468 L2101 441 L2075 422 L2050 360 L2040 330Z" fill="url(#hr)"/>
<ellipse cx="2180" cy="520" rx="30" ry="160" fill="#7d6450" opacity=".6" filter="url(#b10)"/>
<ellipse cx="2120" cy="330" rx="40" ry="70" fill="#5c483c" opacity=".6" filter="url(#b10)"/>
<path d="M2108 450 L2118 520 L2134 575 L2142 605 L2132 650 L2126 690 L2116 735 L2128 775 L2160 825" stroke="#4e3c31" stroke-width="34" fill="none" opacity=".7" filter="url(#b10)"/>
<path d="M2200 440 L2208 560 L2208 700 L2200 780 L2175 850" stroke="#7e6652" stroke-width="22" fill="none" opacity=".6" filter="url(#b10)"/>
<!-- forehead + right side skin + nose + lips region (plain skin) -->
<path d="M1824 466 L1839 440 L1865 418 L1898 400 L1935 394 L1972 396 L2010 400 L2046 408 L2075 422 L2101 441 L2112 468 L2115.5 526.5 L2128.5 570 L2135 600 L2124 647.6 L2117.6 678 L2104.7 716.8 L2106.8 742.8 L2119 760 L2152 816 L2157 845 L2148 861 L2121 876 L2111 915 L2119 928 L2117 946 L2111 973 L2105.6 986.6 L2108.5 1011.7 L2098 1031 L2085 1060 L2074 1079 L2064 1110 L2043 1143 L1997 1166.5 L1958 1179.4 L1927 1185 L1868 1182 L1845 1187 L1824 1200 L1790 1218 L1752 1230 L1726 1226 L1700 1213 L1677 1160 L1675 1151 L1661 1110 L1650 1100 L1700 900 L1800 600Z" fill="#dcae9f"/>
<path d="M1824 468 L1839 440 L1865 418 L1898 400 L1935 394 L1972 396 L2010 400 L2046 408 L2075 422 L2101 441 L2112 468Z" fill="url(#fh)"/>
<path d="M1824 466 L1839 440 L1865 418 L1898 400 L1935 394 L1972 396 L2010 400 L2046 408 L2075 422 L2101 441 L2112 468" stroke="#75604f" stroke-width="20" fill="none" opacity=".8" filter="url(#b10)"/>
<!-- under-chin shadow + neck -->
<path d="M1640 1112 L1840 1116 L1900 1135 L1990 1150 L2050 1128 L2043 1143 L1997 1166.5 L1958 1179.4 L1927 1185 L1868 1182 L1845 1187 L1824 1200 L1790 1218 L1752 1230 L1726 1226 L1700 1213 L1677 1160 L1675 1151 L1661 1110Z" fill="url(#nk)"/>
<path d="M1830 1150 Q1900 1140 1990 1160 L1958 1181 L1868 1183 L1840 1178Z" fill="#5e4d49" opacity=".9" filter="url(#b4)"/>
<path d="M1777 1019 L1800 1024 L1845 1040 L1881 1061 L1932 1091.6 L1971 1104.5 L2033 1110 L2060 1112 L2043 1143 L1997 1166 L1900 1150 L1840 1125 L1777 1116Z" fill="url(#uj)" filter="url(#b2)"/>
<!-- turtleneck -->
<path d="M1677 1160 L1700 1213 L1726 1226 L1752 1230 L1790 1218 L1824 1200 L1845 1187 L1868 1182 L1927 1185 L1914 1221 L1904 1272 L1886 1311 L1868 1340 L1652 1340 L1649 1332 L1628 1295 L1601 1246 L1603 1217 L1640 1190Z" fill="url(#tn)"/>
<path d="M1660 1215 Q1750 1250 1800 1228 L1840 1203 L1830 1262 Q1760 1295 1650 1272Z" fill="#3b4462" opacity=".8" filter="url(#b10)"/>
<!-- hair lock in front of neck (left of neck) -->
<path d="M1575 1110 L1640 1112 L1661 1110 L1675 1151 L1677 1160 L1640 1190 L1603 1217 L1601 1246 L1628 1295 L1649 1332 L1652 1340 L1500 1340 L1520 1200Z" fill="#a5927c"/>
<ellipse cx="1592" cy="1185" rx="26" ry="40" fill="#7a6755" opacity=".6" filter="url(#b10)"/>
<!-- strands -->
<g clip-path="url(#hairAll)">
<g mask="url(#mkv)"><rect x="1237" y="380" width="1000" height="960" filter="url(#st)" opacity=".7"/><rect x="1237" y="380" width="1000" height="960" filter="url(#sl)" opacity=".16"/></g>
<g mask="url(#mkt)"><g transform="rotate(40 1700 360)"><rect x="1050" y="-300" width="1200" height="1200" filter="url(#st)" opacity=".65"/><rect x="1050" y="-300" width="1200" height="1200" filter="url(#sl)" opacity=".1"/></g></g>
</g>
<!-- overlay: hair-under-bone region -->
<path d="M1541 487 L1674.5 472 L1687 503 L1732 543 L1739.5 583 L1727 628 L1712 673 L1682 713 L1662 743 L1642 783 L1637 833 L1647 883 L1667 953 L1682 1019 L1690 1060 L1700 1114 L1630 1113 L1600 1084 L1585 1039 L1615 979 L1667 953 L1637 943 L1612 923 L1617 883 L1587 875.5 L1547 863 L1517 833 L1532 753 L1539.5 733 L1547 683 L1574.5 653 L1577 573 L1547 523Z" fill="url(#ov1)"/>
<!-- overlay: temple (hair seen through, right of suture) -->
<path d="M1674.5 472 L1854 467 L1800 540 L1749 603 L1709 683 L1689 733 L1665 790 L1650 850 L1647 883 L1637 833 L1642 783 L1662 743 L1682 713 L1712 673 L1727 628 L1739.5 583 L1732 543 L1687 503Z" fill="#9a8f8e"/>
<g clip-path="url(#ovh)"><g transform="rotate(22 1650 650)"><rect x="1350" y="350" width="600" height="700" filter="url(#sl)" opacity=".38"/><rect x="1350" y="350" width="600" height="700" filter="url(#st)" opacity=".45"/></g></g>
<!-- overlay: face-under-bone (pink) -->
<path d="M1854 467 L1929 462 L2050.6 468 L2068 505 L2087 561 L2094 613 L2074 658 L2066 684 L2094 710 L2100 727.6 L2117.6 780 L2088 780 L2073 808 L2063 847 L2066 890 L2082 925 L2090 954 L2073 983 L2053 1012 L2038 1045 L2033 1061 L2043 1092 L2033 1110 L1971 1104.5 L1932 1091.6 L1881 1061 L1845 1040 L1800 1024 L1777 1019 L1777 1116 L1700 1114 L1690 1060 L1682 1019 L1667 953 L1647 883 L1650 850 L1665 790 L1689 733 L1709 683 L1749 603 L1800 540Z" fill="#efc5bd"/>
<!-- soft transition temple->face -->
<path d="M1854 467 L1800 540 L1749 603 L1709 683 L1689 733 L1665 790 L1650 850" stroke="#d8bdb3" stroke-width="34" fill="none" opacity=".75" filter="url(#b10)"/>
<!-- bone details -->
<path d="M1674.5 472 L1687 503 L1732 543 L1739.5 583 L1727 628 L1712 673 L1682 713 L1662 743 L1642 783 L1637 833 L1647 883 L1667 953 L1682 1019" stroke="#4a3c38" stroke-width="4" fill="none" opacity=".75" stroke-dasharray="2 1.4"/>
<radialGradient id="orb" cx="1956" cy="720" r="66" gradientUnits="userSpaceOnUse"><stop offset="0" stop-color="#b99a8c" stop-opacity=".75"/><stop offset="0.75" stop-color="#c2a294" stop-opacity=".6"/><stop offset="1" stop-color="#c9aa9c" stop-opacity=".35"/></radialGradient>
<ellipse cx="1956" cy="702" rx="64" ry="54" fill="url(#orb)"/>
<path d="M1898 716 Q1955 775 2014 722 Q1990 757 1955 758 Q1920 756 1898 716Z" fill="#a98b7e" opacity=".55" filter="url(#b4)"/>
<!-- cheek highlight -->
<ellipse cx="1925" cy="765" rx="75" ry="35" fill="#f7dad1" opacity=".7" filter="url(#b10)"/>
<!-- temporal region shading + spots -->
<path d="M1725 610 Q1790 585 1850 620 L1845 735 L1700 745 L1710 690Z" fill="#e7c3b7" opacity=".6" filter="url(#b10)"/>
<ellipse cx="1791" cy="635" rx="4.5" ry="15" fill="#8a6a4a" opacity=".75" filter="url(#b2)" transform="rotate(-12 1791 635)"/>
<ellipse cx="1731" cy="694" rx="11" ry="6.5" fill="#9a7860" opacity=".75" filter="url(#b2)" transform="rotate(-20 1731 694)"/>
<!-- zygomatic arch -->
<path d="M1688 748 Q1760 738 1850 742 Q1885 745 1905 728" stroke="#f6dbd2" stroke-width="14" fill="none" opacity=".7" filter="url(#b4)"/>
<path d="M1686 760 Q1760 752 1848 756" stroke="#c7a598" stroke-width="2.2" fill="none" opacity=".8"/>
<path d="M1718 772 Q1760 758 1800 780 Q1790 806 1755 810 Q1728 800 1718 772Z" fill="#c8a79b" opacity=".7" filter="url(#b2)"/>
<path d="M1718 772 Q1760 758 1800 780" stroke="#a78577" stroke-width="2" fill="none" opacity=".6"/>
<!-- ramus -->
<path d="M1830 818 Q1870 812 1900 840 Q1880 880 1870 916 Q1838 880 1830 818Z" fill="#cfa898" opacity=".7" filter="url(#b4)"/>
<path d="M1832 822 Q1832 900 1862 940" stroke="#b99385" stroke-width="3.5" fill="none" opacity=".7" filter="url(#b2)"/>
<!-- neck/cervical shading -->
<path d="M1690 900 Q1720 1000 1700 1110" stroke="#b99b90" stroke-width="10" fill="none" opacity=".5" filter="url(#b4)"/>
<path d="M1700 1020 Q1740 1010 1775 1030 L1775 1112 L1700 1112Z" fill="#d9b3a8" opacity=".7" filter="url(#b4)"/>
<!-- nasal spots -->
<ellipse cx="1946" cy="815" rx="10" ry="7" fill="#a88478" opacity=".8" filter="url(#b2)" transform="rotate(-30 1946 815)"/>
<ellipse cx="1978" cy="795" rx="10" ry="7" fill="#b59488" opacity=".7" filter="url(#b2)"/>
<!-- lower face shading -->
<path d="M1780 1000 Q1900 1060 2036 1100 L2033 1110 L1971 1104 L1932 1092 L1881 1061 L1845 1040 L1800 1024Z" fill="#e2b8ad" opacity=".7" filter="url(#b4)"/>
<!-- teeth / yellow band -->
<path d="M1842 878 Q1900 868 1990 878 Q2040 896 2060 940 Q2030 985 1990 996 Q1900 996 1860 958 Q1842 920 1842 878Z" fill="#e8bfa5" opacity=".8" filter="url(#b4)"/>
<path d="M1850 934 Q1880 990 1960 1002 Q2010 1006 2026 990 Q2000 962 1960 962 Q1900 958 1850 934Z" fill="#cbbb7c" opacity=".9" filter="url(#b4)"/>
<!-- nose (plain skin) shading -->
<path d="M2088 780 L2119 760 L2152 816 L2157 845 L2148 861 L2121 876 L2111 915 L2082 925 L2066 890 L2063 847 L2073 808Z" fill="#ddb2a6"/>
<ellipse cx="2093" cy="868" rx="25" ry="9" fill="#93686f" opacity=".85" filter="url(#b2)" transform="rotate(-8 2093 868)"/>
<!-- lips -->
<path d="M2000 968 Q2050 946 2098 938 Q2112 938 2117 947 L2111 973 Q2100 983 2075 982 Q2035 978 2000 968Z" fill="url(#lipg)" filter="url(#b2)"/>
<path d="M2038 991 Q2075 983 2107 985 Q2112 1000 2107 1014 Q2096 1036 2070 1040 Q2048 1030 2038 991Z" fill="url(#lipg2)" filter="url(#b2)"/>
<path d="M2010 972 Q2060 984 2108 982" stroke="#94505a" stroke-width="3" fill="none" opacity=".55" filter="url(#b2)"/>
<!-- eye -->
<path d="M1918 702 Q1955 668 2006 683 Q1995 714 1962 716 Q1938 716 1918 702Z" fill="#ccb5b3"/>
<path d="M1914 703 Q1955 660 2009 680" stroke="#8a7078" stroke-width="4" fill="none" opacity=".8" filter="url(#b2)"/>
<path d="M1925 672 Q1965 640 2012 662" stroke="#b89c98" stroke-width="6" fill="none" opacity=".6" filter="url(#b4)"/>
<ellipse cx="1981" cy="696" rx="9" ry="10.5" fill="#55616b"/>
<ellipse cx="1982" cy="696" rx="4" ry="4.8" fill="#252a32"/>
<path d="M1911 634 Q1935 606 1975 601 Q2015 604 2040 636" stroke="#8d716b" stroke-width="13" fill="none" opacity=".7" filter="url(#b4)"/>
<path d="M2092 690 Q2104 680 2116 688 L2111 708 Q2100 712 2092 690Z" fill="#5a5f70" opacity=".8" filter="url(#b2)"/>
</g>
<!-- marker sticker -->
<rect x="1843.4" y="485.4" width="102.3" height="107.2" rx="27" fill="#fbfbfb"/>
<rect x="1856.5" y="501.5" width="78" height="79" rx="3" fill="none" stroke="#3c3c3c" stroke-width="3.6"/>
<path d="M1895.4 499 V584 M1855 539.8 H1936" stroke="#3c3c3c" stroke-width="4.6"/>
<g fill="#3d3d45">
<circle cx="1868" cy="522" r="2.3"/><circle cx="1876" cy="522" r="2.3"/><circle cx="1884" cy="522" r="2.3"/><circle cx="1868" cy="529" r="2.3"/><circle cx="1907" cy="512" r="2.3"/><circle cx="1915" cy="512" r="2.3"/><circle cx="1907" cy="520" r="2.3"/><circle cx="1907" cy="528" r="2.3"/><circle cx="1923" cy="528" r="2.3"/>
<circle cx="1868" cy="560" r="2.3"/><circle cx="1876" cy="560" r="2.3"/><circle cx="1884" cy="560" r="2.3"/><circle cx="1876" cy="568" r="2.3"/><circle cx="1907" cy="552" r="2.3"/><circle cx="1915" cy="552" r="2.3"/><circle cx="1923" cy="560" r="2.3"/><circle cx="1915" cy="568" r="2.3"/></g>
<g fill="#cc5566">
<circle cx="1868" cy="513" r="2.3"/><circle cx="1876" cy="513" r="2.3"/><circle cx="1884" cy="513" r="2.3" opacity=".6"/><circle cx="1876" cy="529" r="2.3"/><circle cx="1884" cy="529" r="2.3"/><circle cx="1923" cy="512" r="2.3"/><circle cx="1915" cy="520" r="2.3"/><circle cx="1923" cy="520" r="2.3"/><circle cx="1915" cy="528" r="2.3"/>
<circle cx="1868" cy="552" r="2.3"/><circle cx="1876" cy="552" r="2.3"/><circle cx="1884" cy="552" r="2.3"/><circle cx="1868" cy="568" r="2.3"/><circle cx="1884" cy="568" r="2.3"/><circle cx="1923" cy="552" r="2.3"/><circle cx="1907" cy="560" r="2.3"/><circle cx="1915" cy="560" r="2.3"/><circle cx="1907" cy="568" r="2.3"/><circle cx="1923" cy="568" r="2.3"/></g>
<!-- cursor -->
<path d="M1918.7 934.3 V958.5 L1924.2 953.4 L1928.2 962.6 L1932 961 L1928 952 L1935.4 951.6Z" fill="#fff" stroke="#222" stroke-width="1.4" stroke-linejoin="round"/>
</svg>

<!-- track playback group -->
<div class="a" style="left:751px;top:1385.8px;width:1492px;height:193.5px;border:1.5px solid #e3e3e3;"></div>
<div class="a" style="left:760px;top:1375px;width:154px;height:22px;background:#f0f0f0;"></div>
<span class="t b" style="left:764.70px;top:1375.87px;font-size:18.17px;transform:scaleX(1.1066);color:#111118;">Track playback</span>
<span class="t" style="left:764.70px;top:1409.15px;font-size:18.02px;transform:scaleX(1.0844);color:#222;">0.000 s</span>
<span class="t" style="left:1459.70px;top:1409.15px;font-size:18.02px;transform:scaleX(1.0864);color:#222;">40.798 s</span>
<span class="t" style="left:2154.50px;top:1409.15px;font-size:18.02px;transform:scaleX(1.0864);color:#222;">40.798 s</span>
<!-- slider -->
<div class="a" style="left:765px;top:1437px;width:1463.5px;height:71.5px;background:#e2e2e2;border:1.3px solid #c3c3c3;"></div>
<div class="a" style="left:2212.6px;top:1468px;width:15px;height:39.5px;background:#ebebeb;"></div>
<div class="a" style="left:780.5px;top:1468.2px;width:1432.3px;height:10.3px;background:#fff;border:1.5px solid #9d9d9d;border-right:none;border-left-color:#b0b0b0"></div>
<svg class="a" style="left:760px;top:1434px" width="1475" height="78" viewBox="760 1434 1475 78">
<path d="M765 1437 H780.7 V1468 L765 1450Z" fill="#a9a9ae"/>
<path d="M2212.6 1437.3 H2228.2 V1456 L2212.6 1468Z" fill="#a9a9ae"/>
<path d="M2208.6 1479.7 H2216.6 L2221 1489.6 V1508 H2204.6 V1489.6Z" fill="#a9a9ae"/>
</svg>
<!-- playback buttons -->
<div class="pb" style="left:1257.2px"></div>
<div class="pb" style="left:1311.3px"></div>
<div class="pb" style="left:1365.2px;width:43.5px"></div>
<div class="pb" style="left:1419.5px;width:43px"></div>
<div class="pb" style="left:1473.3px;width:44px"></div>
<div class="pb" style="left:1555.8px;width:44px"></div>
<div class="pb" style="left:1639.5px;width:44.3px"></div>
<div class="pb" style="left:1690.3px;width:49.7px;top:1517.8px;height:49.7px;border:1.8px solid #5c8cc6;border-radius:6px"></div>
<svg class="a" style="left:1250px;top:1515px" width="360" height="56" viewBox="1250 1515 360 56">
<!-- prev -->
<g fill="#161616"><rect x="1263.6" y="1533" width="3.6" height="20.5" rx="0.8"/><path d="M1281.5 1533 V1553.5 L1266.3 1543.3Z"/><path d="M1295.5 1533 V1553.5 L1280.3 1543.3Z"/></g>
<!-- play -->
<path d="M1323.5 1530.8 V1555.6 L1348.5 1543.2Z" fill="#161616" stroke="#161616" stroke-width="1" stroke-linejoin="round"/>
<!-- pause -->
<g fill="#7a7a7a"><rect x="1376.8" y="1531.5" width="7" height="23" rx="1"/><rect x="1389.2" y="1531.5" width="7" height="23" rx="1"/></g>
<!-- stop -->
<rect x="1430.8" y="1533.8" width="19.6" height="18.4" rx="1.5" fill="#7a7a7a"/>
<!-- next -->
<g fill="#7a7a7a"><path d="M1480.3 1533 V1553.5 L1495.5 1543.3Z"/><path d="M1494.3 1533 V1553.5 L1509.5 1543.3Z"/><rect x="1508.6" y="1533" width="3.6" height="20.5" rx="0.8"/></g>
<!-- loop -->
<path d="M1586.4 1533.9 A12.6 12.6 0 1 1 1578.2 1531.2" fill="none" stroke="#141414" stroke-width="5.6"/>
<path d="M1582.7 1530.9 L1591.9 1529.3 L1590.3 1536.8 L1582.9 1538.9Z" fill="#141414" stroke="#141414" stroke-width=".8" stroke-linejoin="round"/>
</svg>
<span class="t" style="left:1641.45px;top:1533.20px;font-size:19.26px;transform:scaleX(1.1088);color:#1c1c1c;">0.5x</span>
<span class="t" style="left:1703.20px;top:1533.20px;font-size:19.26px;transform:scaleX(1.0986);color:#1c1c1c;">1x</span>
<!-- right tabs -->
<div class="a" style="left:2246.5px;top:1390px;width:350px;height:200px;border:1.5px solid #f8f8f8;background:#f0f0f0"></div>
<div class="a" style="left:2464px;top:1363.8px;width:130px;height:27px;background:#f0f0f0;border:1.5px solid #f8f8f8;border-bottom:none"></div>
<div class="a" style="left:2246.5px;top:1361px;width:218px;height:30.5px;background:#f9f9f9;border:1.5px solid #fcfcfc;border-bottom:none"></div>
<span class="t" style="left:2261.20px;top:1367.72px;font-size:16.57px;transform:scaleX(0.9751);">Movement characteristics</span>
<span class="t" style="left:2479.10px;top:1369.17px;font-size:16.57px;transform:scaleX(0.9677);">Opening</span>
<!-- table -->
<div class="cell" style="left:2250.7px;top:1395.3px;width:147.3px;height:60.4px"></div>
<div class="cell" style="left:2401.6px;top:1395.3px;width:110.2px;height:60.4px"></div>
<div class="cell" style="left:2515px;top:1395.3px;width:73.2px;height:60.4px"></div>
<div class="cell" style="left:2250.7px;top:1459.2px;width:147.3px;height:39.7px"></div>
<div class="cell" style="left:2401.6px;top:1459.2px;width:110.2px;height:39.7px"></div>
<div class="cell" style="left:2515px;top:1459.2px;width:73.2px;height:39.7px"></div>
<div class="cell" style="left:2250.7px;top:1502.6px;width:147.3px;height:41.2px"></div>
<div class="cell" style="left:2401.6px;top:1502.6px;width:110.2px;height:41.2px"></div>
<div class="cell" style="left:2515px;top:1502.6px;width:73.2px;height:41.2px"></div>
<div class="cell" style="left:2250.7px;top:1547.4px;width:147.3px;height:41.2px"></div>
<div class="cell" style="left:2401.6px;top:1547.4px;width:110.2px;height:41.2px"></div>
<div class="cell" style="left:2515px;top:1547.4px;width:73.2px;height:41.2px"></div>
<span class="t" style="left:2412.40px;top:1406.36px;font-size:17.88px;transform:scaleX(1.1355);">Trajectory</span>
<span class="t" style="left:2431.20px;top:1430.16px;font-size:17.88px;transform:scaleX(1.0766);">length</span>
<span class="t" style="left:2526.50px;top:1406.36px;font-size:17.88px;transform:scaleX(1.0707);">Sagit.</span>
<span class="t" style="left:2527.90px;top:1430.16px;font-size:17.88px;transform:scaleX(1.0663);">angle</span>
<span class="t" style="left:2274.40px;top:1471.56px;font-size:17.88px;transform:scaleX(1.0836);">Incisal point</span>
<span class="t" style="left:2281.80px;top:1516.56px;font-size:17.88px;transform:scaleX(1.1017);">Right joint</span>
<span class="t" style="left:2287.60px;top:1559.86px;font-size:17.88px;transform:scaleX(1.1212);">Left joint</span>
<span class="t" style="left:2412.40px;top:1471.56px;font-size:17.88px;transform:scaleX(1.1017);">440.0 mm</span>
<span class="t" style="left:2412.90px;top:1516.56px;font-size:17.88px;transform:scaleX(1.0954);">197.1 mm</span>
<span class="t" style="left:2412.90px;top:1559.86px;font-size:17.88px;transform:scaleX(1.0954);">208.3 mm</span>
<span class="t" style="left:2527.60px;top:1471.56px;font-size:17.88px;transform:scaleX(1.1192);">33.6°</span>
<span class="t" style="left:2527.60px;top:1516.56px;font-size:17.88px;transform:scaleX(1.1192);">42.8°</span>
<span class="t" style="left:2527.60px;top:1559.86px;font-size:17.88px;transform:scaleX(1.1192);">50.6°</span>

</div></div>
</body></html>
